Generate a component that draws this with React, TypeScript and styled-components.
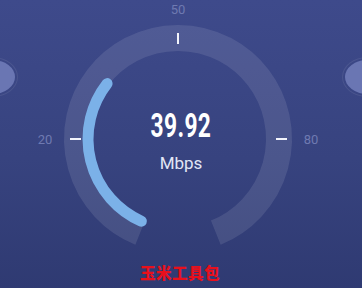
import React from 'react';
import styled, { createGlobalStyle } from 'styled-components';

const GlobalStyle = createGlobalStyle`
  html, body {
    margin: 0;
    padding: 0;
    background: #2f3b74;
  }
  * { box-sizing: border-box; }
`;

const Screen = styled.div`
  position: relative;
  width: 362px;
  height: 288px;
  overflow: hidden;
  display: flex;
  flex-direction: column;
  align-items: center;
  background: linear-gradient(180deg, #3e4a8b 0%, #37437f 55%, #2f3a72 100%);
  font-family: Roboto, "Noto Sans", sans-serif;
`;

const SideKnob = styled.div<{ $side: 'left' | 'right' }>`
  position: absolute;
  top: 60px;
  ${(p) => (p.$side === 'left' ? 'left: -30px;' : 'right: -28px;')}
  width: 45px;
  height: 34px;
  border-radius: 50%;
  background: #6a76b3;
  outline: 1px solid rgba(255, 255, 255, 0.08);
  outline-offset: 2px;
`;

const Gauge = styled.div`
  position: relative;
  width: 362px;
  height: 262px;
  flex-shrink: 0;
`;

const Dial = styled.svg`
  display: block;
  width: 362px;
  height: 262px;
`;

const Readout = styled.div`
  position: absolute;
  left: 0;
  right: 0;
  top: 107px;
  display: flex;
  flex-direction: column;
  align-items: center;
`;

const Speed = styled.div`
  color: #ffffff;
  font-weight: 700;
  font-size: 33px;
  line-height: 38px;
  letter-spacing: 0.5px;
  transform: scaleX(0.69);
`;

const Unit = styled.div`
  margin-top: 8px;
  color: #e2e6f6;
  font-size: 17px;
  line-height: 20px;
`;

const Brand = styled.div`
  color: #e8101c;
  font-family: "Noto Sans CJK SC", "Noto Sans", sans-serif;
  font-weight: 900;
  font-size: 15.5px;
  line-height: 20px;
  letter-spacing: 0.5px;
  margin-left: -2px;
`;

const CX = 178;
const CY = 139;

const polar = (r: number, deg: number) => {
  // deg measured clockwise from straight down
  const a = (deg * Math.PI) / 180;
  return { x: CX - r * Math.sin(a), y: CY + r * Math.cos(a) };
};

const arc = (r: number, from: number, to: number) => {
  const s = polar(r, from);
  const e = polar(r, to);
  const large = to - from > 180 ? 1 : 0;
  return `M ${s.x.toFixed(1)} ${s.y.toFixed(1)} A ${r} ${r} 0 ${large} 1 ${e.x.toFixed(1)} ${e.y.toFixed(1)}`;
};

const labelStyle = {
  fill: '#6f7ab1',
  fontSize: 13,
  fontFamily: 'Roboto, sans-serif',
};

export default function App() {
  return (
    <>
      <GlobalStyle />
      <Screen>
        <SideKnob $side="left" />
        <SideKnob $side="right" />
        <Gauge>
          <Dial viewBox="0 0 362 262">
            <path d={arc(101, 22, 338)} fill="none" stroke="rgba(255,255,255,0.1)" strokeWidth={26} />
            <path d={arc(90, 24, 128)} fill="none" stroke="#7bb1e8" strokeWidth={11} strokeLinecap="round" />
            <line x1={CX} y1={33} x2={CX} y2={44} stroke="#f2f4fb" strokeWidth={2} />
            <line x1={70} y1={CY} x2={81} y2={CY} stroke="#f2f4fb" strokeWidth={2} />
            <line x1={276} y1={CY} x2={287} y2={CY} stroke="#f2f4fb" strokeWidth={2} />
            <text x={CX} y={14} textAnchor="middle" style={labelStyle}>50</text>
            <text x={45} y={144} textAnchor="middle" style={labelStyle}>20</text>
            <text x={311} y={144} textAnchor="middle" style={labelStyle}>80</text>
          </Dial>
          <Readout>
            <Speed>39.92</Speed>
            <Unit>Mbps</Unit>
          </Readout>
        </Gauge>
        <Brand>玉米工具包</Brand>
      </Screen>
    </>
  );
}
